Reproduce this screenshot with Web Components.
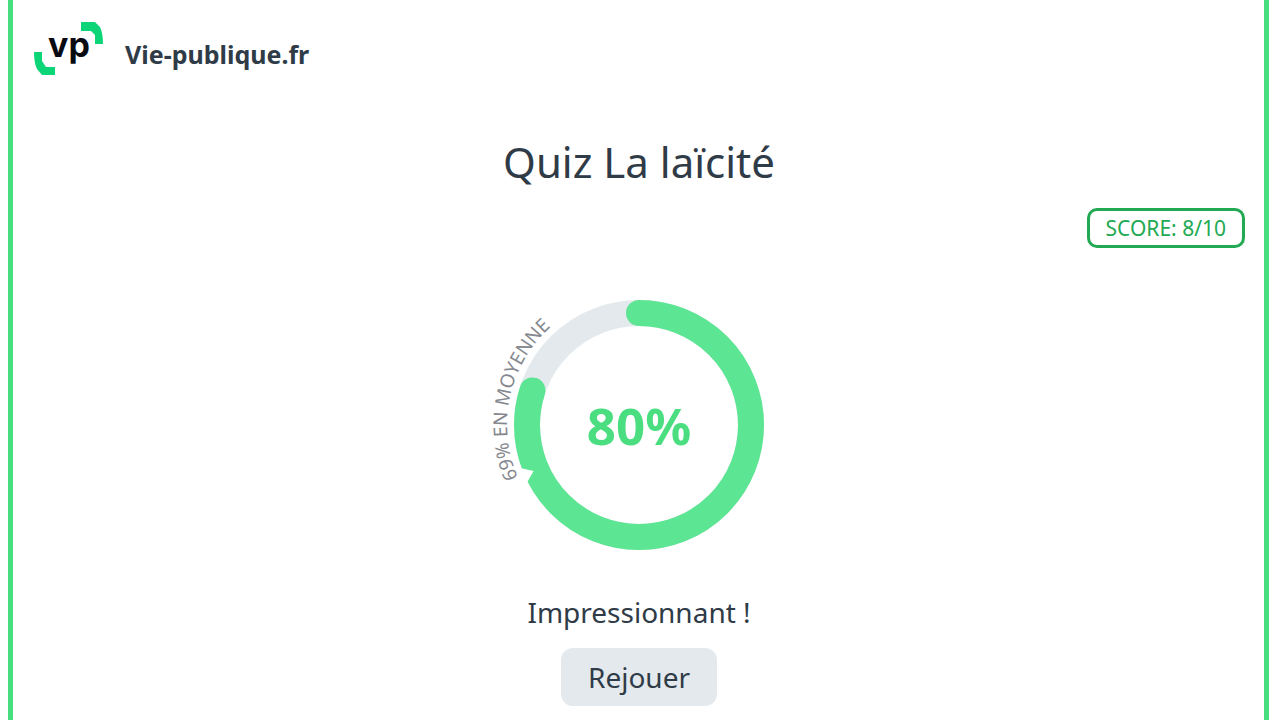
<!DOCTYPE html>
<html lang="fr">
<head>
  <meta charset="utf-8">
  <meta name="viewport" content="width=device-width, initial-scale=1">
  <title>Quiz La laïcité</title>
  <style>
    body {
      margin: 0;
      background: #fff;
      color: #2f3b47;
      font-family: 'Noto Sans', 'Open Sans', sans-serif;
    }
  </style>
</head>
<body>
  <quiz-frame>
    <site-brand slot="header">Vie-publique.fr</site-brand>
    <span slot="title">Quiz La laïcité</span>
    <score-badge slot="score" score="8" total="10"></score-badge>
    <score-ring value="80" average="69"></score-ring>
    <span slot="message">Impressionnant !</span>
    <replay-button slot="action">Rejouer</replay-button>
  </quiz-frame>

  <script>
    // Page frame with the green side borders
    class QuizFrame extends HTMLElement {
      constructor() {
        super();
        this.attachShadow({ mode: 'open' });
        this.shadowRoot.innerHTML = `
          <style>
            :host {
              display: block;
              box-sizing: border-box;
              min-height: 100vh;
              margin: 0 11px 0 8px;
              padding: 20px 19px 12px 20px;
              border: solid #48de80;
              border-width: 0 5px;
            }

            main {
              display: flex;
              flex-direction: column;
              align-items: center;
            }

            h1 {
              margin: 56px 0 0;
              font-size: 42px;
              font-weight: 400;
              line-height: 60px;
            }

            .score {
              align-self: flex-end;
              margin-top: 16px;
            }

            .ring {
              margin-top: 50px;
            }

            p {
              margin: 40px 0 16px;
              font-size: 28px;
              line-height: 40px;
            }
          </style>
          <header><slot name="header"></slot></header>
          <main>
            <h1><slot name="title"></slot></h1>
            <div class="score"><slot name="score"></slot></div>
            <div class="ring"><slot></slot></div>
            <p><slot name="message"></slot></p>
            <slot name="action"></slot>
          </main>
        `;
      }
    }

    // Logo and site name
    class SiteBrand extends HTMLElement {
      constructor() {
        super();
        this.attachShadow({ mode: 'open' });
        this.shadowRoot.innerHTML = `
          <style>
            :host {
              display: flex;
              align-items: center;
              gap: 20px;
              font-size: 25px;
              font-weight: bold;
              line-height: 36px;
            }

            svg {
              display: block;
              flex: none;
            }

            .name {
              padding-top: 12px;
            }
          </style>
          <svg width="72" height="56" viewBox="0 0 72 56" aria-hidden="true">
            <path fill="#0bd577" d="M48 2h14l5 5q3 6 3 17h-8v-9l-4-4H48zM1 32h8v9l4 6h9v8H9l-5-6Q1 43 1 32z"/>
            <text x="15" y="37" font-family="Inter, sans-serif" font-size="34" font-weight="700" fill="#080b12">vp</text>
          </svg>
          <span class="name"><slot></slot></span>
        `;
      }
    }

    class ScoreBadge extends HTMLElement {
      constructor() {
        super();
        this.attachShadow({ mode: 'open' });
      }

      connectedCallback() {
        this.shadowRoot.innerHTML = `
          <style>
            :host {
              display: block;
              padding: 0 16px;
              border: 3px solid #22a953;
              border-radius: 10px;
              color: #22a953;
              font-size: 21px;
              line-height: 34px;
            }
          </style>
          <span>SCORE: ${this.getAttribute('score')}/${this.getAttribute('total')}</span>
        `;
      }
    }

    // Ring gauge, with a notch and a curved label for the average
    class ScoreRing extends HTMLElement {
      constructor() {
        super();
        this.attachShadow({ mode: 'open' });
      }

      static get observedAttributes() {
        return ['value', 'average'];
      }

      connectedCallback() {
        this._render();
      }

      attributeChangedCallback(name, oldValue, newValue) {
        if (oldValue === newValue) return;
        this._render();
      }

      _render() {
        const value = Number(this.getAttribute('value'));
        const average = Number(this.getAttribute('average'));
        this.shadowRoot.innerHTML = `
          <style>
            :host {
              display: block;
            }

            svg {
              display: block;
              overflow: visible;
            }

            .value {
              fill: #4ade80;
              font-size: 51px;
              font-weight: bold;
              text-anchor: middle;
            }

            .average {
              fill: #85888f;
              font-size: 19px;
            }
          </style>
          <svg width="254" height="254" viewBox="-127 -127 254 254" role="img" aria-label="${value}%">
            <defs>
              <path id="label" d="M0 132A132 132 0 0 1 0 -132"/>
            </defs>
            <g fill="none" stroke-width="26">
              <circle r="112" stroke="#e3e9ed"/>
              <circle r="112" stroke="#5ce592" stroke-linecap="round" pathLength="100"
                stroke-dasharray="${value} 100" transform="rotate(-90)"/>
            </g>
            <path fill="#fff" d="M-130 -11L-115 0L-130 11z" transform="rotate(${average * 3.6 - 272})"/>
            <text class="value" y="20">${value}%</text>
            <text class="average"><textPath href="#label" startOffset="153">${average}% EN MOYENNE</textPath></text>
          </svg>
        `;
      }
    }

    class ReplayButton extends HTMLElement {
      constructor() {
        super();
        this.attachShadow({ mode: 'open' });
        this.shadowRoot.innerHTML = `
          <style>
            :host {
              display: block;
            }

            button {
              padding: 10px 27px;
              border: 0;
              border-radius: 12px;
              background: #e3e9ed;
              color: inherit;
              font: inherit;
              font-size: 28px;
              line-height: 38px;
              cursor: pointer;
            }
          </style>
          <button type="button"><slot></slot></button>
        `;
      }
    }

    customElements.define('quiz-frame', QuizFrame);
    customElements.define('site-brand', SiteBrand);
    customElements.define('score-badge', ScoreBadge);
    customElements.define('score-ring', ScoreRing);
    customElements.define('replay-button', ReplayButton);
  </script>
</body>
</html>
